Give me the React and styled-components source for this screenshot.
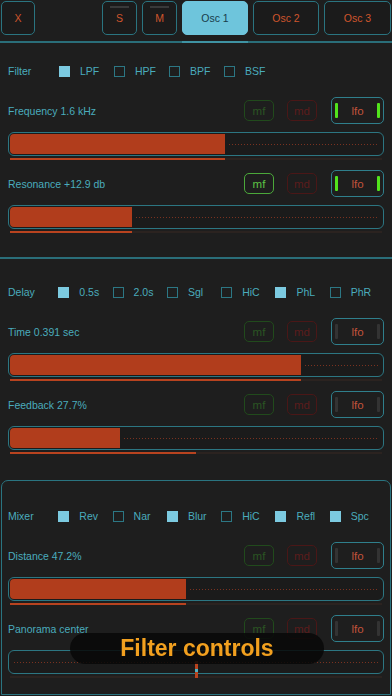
import React from 'react'
import styled, { createGlobalStyle } from 'styled-components'

const GlobalStyle = createGlobalStyle`
  html, body {
    margin: 0;
    padding: 0;
    background: #1e1e1e;
  }
  body {
    font-family: "Liberation Sans", Arial, sans-serif;
    overflow: hidden;
  }
`

const Page = styled.div`
  width: 392px;
  height: 696px;
  display: flex;
  flex-direction: column;
  background: #1e1e1e;
  overflow: hidden;
`

const TopBar = styled.div`
  box-sizing: border-box;
  height: 43px;
  display: flex;
  align-items: flex-start;
  gap: 5px;
  padding: 1px 1px 0;
  border-bottom: 2px solid #2a6e79;
`

const TopButton = styled.div`
  position: relative;
  box-sizing: border-box;
  width: ${p => p.$w}px;
  height: 34px;
  margin-right: ${p => (p.$push ? 'auto' : '0')};
  display: flex;
  align-items: center;
  justify-content: center;
  border: 1px solid ${p => (p.$active ? '#6ec5dc' : '#2a7480')};
  border-radius: 5px;
  background: ${p => (p.$active ? '#6ec5dc' : '#1b1b1b')};
  color: ${p => (p.$active ? '#183c4a' : '#d0552c')};
  font-size: 10.5px;

  &::before {
    content: '';
    display: ${p => (p.$indicator ? 'block' : 'none')};
    position: absolute;
    top: 4px;
    left: 7px;
    right: 7px;
    height: 2px;
    background: #393939;
  }

  &::after {
    content: '';
    display: ${p => (p.$active ? 'block' : 'none')};
    position: absolute;
    top: 39px;
    left: -1px;
    right: -1px;
    height: 2px;
    background: #3f93a3;
  }
`

const Section = styled.section`
  display: flex;
  flex-direction: column;
  padding: ${p => p.$pad};
  margin: ${p => (p.$boxed ? '0 1px' : '0')};
  border: ${p => (p.$boxed ? '1px solid #2a7480' : 'none')};
  border-bottom: ${p => (p.$boxed ? '1px solid #2a7480' : p.$line ? '2px solid #2a6e79' : 'none')};
  border-radius: ${p => (p.$boxed ? '7px 7px 0 0' : '0')};
`

const CheckRow = styled.div`
  height: 14px;
  display: flex;
  align-items: center;
  margin-bottom: 19px;
  font-size: 10.5px;
  color: #4aacbd;
`

const RowLabel = styled.span`
  width: 51px;
`

const CheckItem = styled.label`
  width: 55px;
  display: flex;
  align-items: center;
  gap: 10px;
`

const Box = styled.span`
  box-sizing: border-box;
  width: 11px;
  height: 11px;
  background: ${p => (p.$on ? '#7ccae0' : 'transparent')};
  border: 1px solid ${p => (p.$on ? '#7ccae0' : '#2c7784')};
`

const ParamList = styled.div`
  display: flex;
  flex-direction: column;
  gap: 10px;
`

const Param = styled.div`
  display: flex;
  flex-direction: column;
`

const Header = styled.div`
  height: 27px;
  display: flex;
  align-items: center;
`

const ParamLabel = styled.span`
  flex: 1;
  font-size: 10.5px;
  color: #4aacbd;
`

const toneColors = {
  green: { off: ['#214a1c', '#2b5523'], on: ['#4ba83a', '#5dc245'] },
  red: { off: ['#4a1717', '#5c1c1c'], on: ['#a83a3a', '#d04a4a'] },
}

const ModButton = styled.span`
  box-sizing: border-box;
  width: 30px;
  height: 21px;
  margin-right: ${p => p.$gap}px;
  display: flex;
  align-items: center;
  justify-content: center;
  border: 1px solid ${p => toneColors[p.$tone][p.$on ? 'on' : 'off'][0]};
  border-radius: 5px;
  color: ${p => toneColors[p.$tone][p.$on ? 'on' : 'off'][1]};
  font-size: 11.5px;
`

const Lfo = styled.span`
  box-sizing: border-box;
  width: 53px;
  height: 27px;
  padding: 0 3px;
  display: flex;
  align-items: center;
  justify-content: space-between;
  border: 1px solid #2f7f8c;
  border-radius: 5px;
  color: #c4533b;
  font-size: 11.5px;
`

const LfoBar = styled.span`
  width: 3px;
  height: 15px;
  border-radius: 1px;
  background: ${p => (p.$on ? '#52e31c' : '#333333')};
`

const Slider = styled.div`
  position: relative;
  box-sizing: border-box;
  margin-top: 8px;
  height: 24px;
  padding: 1px;
  display: flex;
  border: 1px solid #2c7682;
  border-radius: 6px;
  background: #1b1b1b;
`

const Fill = styled.div`
  background: #b13d1c;
  border-radius: 4px 0 0 4px;
`

const Rest = styled.div`
  flex: 1;
  display: flex;
  align-items: center;
  padding: 0 4px;
`

const Dots = styled.div`
  flex: 1;
  height: 1px;
  background-image: linear-gradient(to right, #7a3220 1px, transparent 1px);
  background-size: 3px 1px;
`

const Marker = styled.div`
  position: absolute;
  left: calc(50% - 1px);
  top: 10px;
  width: 3px;
  height: 17px;
  background: #b8431f;

  &::after {
    content: '';
    position: absolute;
    left: 0;
    top: 8px;
    width: 3px;
    height: 3px;
    background: #4fb3c4;
  }
`

const Under = styled.div`
  height: 2px;
  margin: 2px 2px 0;
  display: flex;
  background: #2b2320;
`

const UnderLit = styled.div`
  background: #b8431f;
`

const Toast = styled.div`
  position: fixed;
  left: 70px;
  top: 633px;
  width: 254px;
  height: 31px;
  display: flex;
  align-items: center;
  justify-content: center;
  border-radius: 16px;
  background: rgba(8, 8, 8, 0.86);
  color: #f2a01f;
  font-size: 23px;
  font-weight: bold;
`

const sections = [
  {
    name: 'Filter',
    pad: '21px 8px 24px',
    line: true,
    checks: [['LPF', true], ['HPF', false], ['BPF', false], ['BSF', false]],
    params: [
      { label: 'Frequency 1.6 kHz', value: 0.578, mf: false, lfo: true },
      { label: 'Resonance +12.9 db', value: 0.328, mf: true, lfo: true },
    ],
  },
  {
    name: 'Delay',
    pad: '26px 8px 26px',
    checks: [['0.5s', true], ['2.0s', false], ['Sgl', false], ['HiC', false], ['PhL', true], ['PhR', false]],
    params: [
      { label: 'Time 0.391 sec', value: 0.782 },
      { label: 'Feedback 27.7%', value: 0.296, under: 0.5 },
    ],
  },
  {
    name: 'Mixer',
    pad: '28px 6px 16px',
    boxed: true,
    checks: [['Rev', true], ['Nar', false], ['Blur', true], ['HiC', false], ['Refl', true], ['Spc', true]],
    params: [
      { label: 'Distance 47.2%', value: 0.472 },
      { label: 'Panorama center', center: true },
    ],
  },
]

function ParamControl({ p }) {
  const value = p.center ? 0 : p.value
  const under = p.under ?? value
  return (
    <Param>
      <Header>
        <ParamLabel>{p.label}</ParamLabel>
        <ModButton $tone="green" $on={p.mf} $gap={13}>mf</ModButton>
        <ModButton $tone="red" $gap={14}>md</ModButton>
        <Lfo>
          <LfoBar $on={p.lfo} />
          lfo
          <LfoBar $on={p.lfo} />
        </Lfo>
      </Header>
      <Slider>
        {value > 0 && <Fill style={{ width: `${value * 100}%` }} />}
        <Rest>
          <Dots />
        </Rest>
        {p.center && <Marker />}
      </Slider>
      <Under>
        {under > 0 && <UnderLit style={{ width: `${under * 100}%` }} />}
      </Under>
    </Param>
  )
}

export default function App() {
  return (
    <Page>
      <GlobalStyle />
      <TopBar>
        <TopButton $w={34} $push>X</TopButton>
        <TopButton $w={35} $indicator>S</TopButton>
        <TopButton $w={35} $indicator>M</TopButton>
        <TopButton $w={66} $active>Osc 1</TopButton>
        <TopButton $w={66}>Osc 2</TopButton>
        <TopButton $w={67}>Osc 3</TopButton>
      </TopBar>

      {sections.map(s => (
        <Section key={s.name} $pad={s.pad} $line={s.line} $boxed={s.boxed}>
          <CheckRow>
            <RowLabel>{s.name}</RowLabel>
            {s.checks.map(([label, on]) => (
              <CheckItem key={label}>
                <Box $on={on} />
                {label}
              </CheckItem>
            ))}
          </CheckRow>
          <ParamList>
            {s.params.map(p => (
              <ParamControl key={p.label} p={p} />
            ))}
          </ParamList>
        </Section>
      ))}

      <Toast>Filter controls</Toast>
    </Page>
  )
}
